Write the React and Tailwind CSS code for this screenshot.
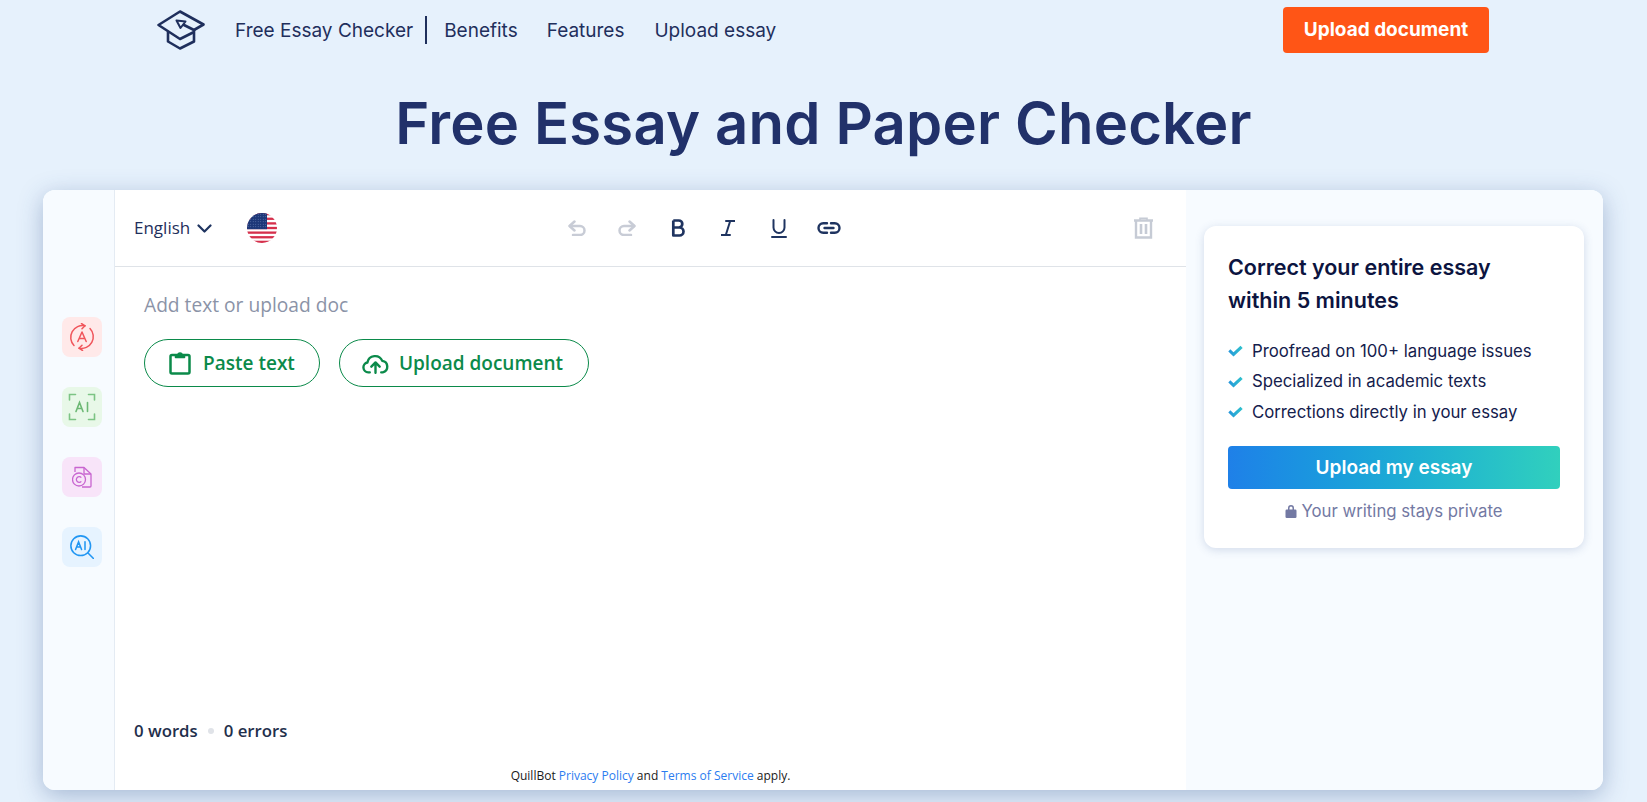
import React from 'react';

const inter = "font-['Inter',sans-serif]";
const openSans = "font-['Open_Sans',sans-serif]";

const LogoCap = () => (
  <svg width="48" height="40" viewBox="0 0 48 40" fill="none" stroke="#1f2f5c" strokeWidth="2.600" strokeLinejoin="round" strokeLinecap="round">
    <path d="M36 22.500 L23 29 L1.500 15 L23 1.500 L46.500 14.500 L37 20 L27 15" />
    <path d="M19.500 10.500 L28.500 11.500 L23.500 18 Z" strokeWidth="2" />
    <path d="M11 22 V31.500 L23 38.500 L37 31.500 V20" />
  </svg>
);

const stripes = [0, 2, 4, 6, 8, 10, 12];

const UsFlag = () => (
  <svg width="30" height="30" viewBox="0 0 30 30">
    <defs>
      <clipPath id="flag-circle"><circle cx="15" cy="15" r="15" /></clipPath>
      <pattern id="flag-stars" width="2.500" height="2.500" patternUnits="userSpaceOnUse">
        <circle cx="1.200" cy="1.200" r="0.450" fill="#7d93c4" />
      </pattern>
    </defs>
    <g clipPath="url(#flag-circle)">
      <rect width="30" height="30" fill="#fff" />
      {stripes.map((i) => (
        <rect key={i} y={i * 2.31} width="30" height="2.310" fill="#d5304c" />
      ))}
      <rect width="20" height="16.200" fill="#1d3778" />
      <rect width="20" height="16.200" fill="url(#flag-stars)" />
    </g>
  </svg>
);

const Chevron = () => (
  <svg width="15" height="9" viewBox="0 0 15 9" fill="none" stroke="#1f3460" strokeWidth="2.200" strokeLinecap="round" strokeLinejoin="round">
    <path d="M1.500 1.500L7.500 7.500L13.500 1.500" />
  </svg>
);

const UndoIcon = ({ flip }) => (
  <svg width="18" height="16" viewBox="0 0 18 16" fill="none" stroke="#c8ccd6" strokeWidth="2.500" strokeLinecap="round" strokeLinejoin="round" className={flip ? '-scale-x-100' : ''}>
    <path d="M6.500 1.500L1.500 6L6.500 10.500" />
    <path d="M2 6H12a4.500 4.500 0 0 1 0 9H5" />
  </svg>
);

const BoldIcon = () => (
  <svg width="14" height="18" viewBox="0 0 14 18" fill="none" stroke="#1f3460" strokeWidth="2.700" strokeLinejoin="round">
    <path d="M2.300 1.500V16.500H8.500a4 4 0 0 0 0-8H2.300M2.300 1.500H7.800a3.500 3.500 0 0 1 0 7" />
  </svg>
);

const ItalicIcon = () => (
  <svg width="14" height="16" viewBox="0 0 14 16" fill="none" stroke="#1f3460" strokeWidth="2" strokeLinecap="round">
    <path d="M5 1H13.500M0.500 15H9M9.200 1L4.800 15" />
  </svg>
);

const UnderlineIcon = () => (
  <svg width="16" height="19" viewBox="0 0 16 19" fill="none" stroke="#1f3460" strokeWidth="2" strokeLinecap="round">
    <path d="M2.500 1V8.500a5.500 5.500 0 0 0 11 0V1" />
    <path d="M1 18H15" />
  </svg>
);

const LinkIcon = () => (
  <svg width="24" height="12" viewBox="0 0 24 12" fill="none" stroke="#1f3460" strokeWidth="2.400" strokeLinecap="round">
    <path d="M10 1.300H6.200a4.700 4.700 0 0 0 0 9.400H10" />
    <path d="M14 1.300H17.800a4.700 4.700 0 0 1 0 9.400H14" />
    <path d="M7.500 6H16.500" />
  </svg>
);

const TrashIcon = () => (
  <svg width="19" height="22" viewBox="0 0 19 22" fill="none" stroke="#c6cbd5" strokeWidth="2.400">
    <path d="M0 3.500H19" />
    <path d="M6 3V1.200H13V3" strokeWidth="1.600" />
    <path d="M2 3.500V20.500H17V3.500" />
    <path d="M7 7V17M12 7V17" strokeWidth="2.600" />
  </svg>
);

const ClipboardIcon = () => (
  <svg width="22" height="24" viewBox="0 0 22 24" fill="none" stroke="#0b8a4a" strokeWidth="2.500" strokeLinejoin="round">
    <rect x="1.500" y="4" width="19" height="18.500" rx="1.500" />
    <path d="M6.500 4V6.500H15.500V4H13a2 2 0 0 0-4 0Z" fill="#0b8a4a" strokeWidth="1.500" />
  </svg>
);

const CloudIcon = () => (
  <svg width="27" height="21" viewBox="0 0 26 20" fill="none" stroke="#0b8a4a" strokeWidth="2.300" strokeLinecap="round" strokeLinejoin="round">
    <path d="M7.500 18.500H6a4.800 4.800 0 0 1-.8-9.500A7.500 7.500 0 0 1 19.500 7.500a5.600 5.600 0 0 1 .5 11H18.500" />
    <path d="M13 19V9.500M9 13l4-4 4 4" />
  </svg>
);

const CheckMark = () => (
  <svg width="15" height="12" viewBox="0 0 15 12" className="shrink-0">
    <defs>
      <linearGradient id="check-fill" x1="0" y1="0" x2="1" y2="0">
        <stop offset="0" stopColor="#2595dc" />
        <stop offset="1" stopColor="#2fc4cc" />
      </linearGradient>
    </defs>
    <path d="M0.300 6.500L2.300 4.300L5.500 7.300L12.500 0.800L14.700 3L5.500 11.500Z" fill="url(#check-fill)" />
  </svg>
);

const LockIcon = () => (
  <svg width="12" height="14" viewBox="0 0 12 14" fill="#7379a3" className="shrink-0">
    <path d="M3 6V4a3 3 0 0 1 6 0v2h-1.500V4a1.500 1.500 0 0 0-3 0v2Z" />
    <rect x="0.500" y="5.500" width="11" height="8.500" rx="1.200" />
  </svg>
);

const SideIcon = ({ bg, children }) => (
  <div className={`w-10 h-10 rounded-lg flex items-center justify-center ${bg}`}>{children}</div>
);

const benefits = ['Proofread on 100+ language issues', 'Specialized in academic texts', 'Corrections directly in your essay'];

export default function App() {
  return (
    <div className={`h-[802px] overflow-hidden bg-[#e6f1fc] ${inter}`}>
      <nav className="h-[60px] flex items-center pl-[157px] pr-[158px]">
        <LogoCap />
        <div className="flex items-center ml-[30px] text-[19px] text-[#1f2f5c]">
          <span className="pr-3 border-r-2 border-[#1f2f5c] leading-[26px] pt-[2px]">Free Essay Checker</span>
          <a className="ml-[17px] pt-[2px]">Benefits</a>
          <a className="ml-[29px] pt-[2px]">Features</a>
          <a className="ml-[30px] pt-[2px]">Upload essay</a>
        </div>
        <button className="ml-auto w-[206px] h-[46px] rounded bg-[#ff5516] text-white text-[19px] font-bold pt-[1px]">Upload document</button>
      </nav>

      <h1 className="h-[130px] pt-[30px] text-center text-[58px] leading-[66px] font-semibold tracking-[0.2px] text-[#21316a]">Free Essay and Paper Checker</h1>

      <div className="ml-[43px] mr-[44px] h-[600px] rounded-xl overflow-hidden bg-white flex shadow-[0_6px_24px_rgba(50,80,140,0.35)]">
        <aside className="w-[72px] shrink-0 bg-[#f7fbff] border-r border-[#e4ebf3] flex flex-col items-center gap-[30px] pt-[127px] pl-[7px]">
          <SideIcon bg="bg-[#ffe9e9]">
            <svg width="28" height="28" viewBox="0 0 28 28" fill="none" stroke="#f0555b" strokeWidth="1.500" strokeLinecap="round" strokeLinejoin="round">
              <path d="M6 22.500A11.800 11.800 0 0 1 17 2.800M22 5.500A11.800 11.800 0 0 1 11 25.200" />
              <path d="M13.500 0.500l3.500 2.300-3 3M14.500 27.500l-3.500-2.300 3-3" />
              <path d="M9.800 18.500L14 9l4.200 9.500M11.300 15.500h5.400" />
            </svg>
          </SideIcon>
          <SideIcon bg="bg-[#e8f8e8]">
            <svg width="28" height="28" viewBox="0 0 28 28" fill="none" stroke="#7cc484" strokeWidth="1.600" strokeLinecap="round">
              <path d="M1.500 7V1.500h6M20.500 1.500h6V7M26.500 21v5.500h-6M7.500 26.500h-6V21" />
              <path d="M8 18.500L11.500 9.500l3.500 9M9.200 15.500h4.600M19.500 9.500v9" stroke="#6cb874" />
            </svg>
          </SideIcon>
          <SideIcon bg="bg-[#f8e4f9]">
            <svg width="20" height="22" viewBox="0 0 20 22" fill="none" stroke="#c865d0" strokeWidth="1.300" strokeLinejoin="round">
              <path d="M3 6V1.500H12L19 8V20a1 1 0 0 1-1 1H10" />
              <path d="M12 1.500V8H19" />
              <circle cx="7" cy="13.500" r="6.500" />
              <path d="M9.300 11.700a2.800 2.800 0 1 0 0 3.600" />
            </svg>
          </SideIcon>
          <SideIcon bg="bg-[#e6f3ff]">
            <svg width="24" height="24" viewBox="0 0 28 28" fill="none" stroke="#2196f3" strokeWidth="1.800" strokeLinecap="round">
              <circle cx="12.500" cy="12.500" r="11.500" />
              <path d="M21 21l6.500 6.500" />
              <path d="M6.500 17L10 8l3.500 9M7.800 14h4.400M17.500 8v9" />
            </svg>
          </SideIcon>
        </aside>

        <main className="w-[1071px] shrink-0 flex flex-col">
          <div className={`h-[77px] shrink-0 border-b border-[#dfe3e8] flex items-center pl-[19px] pr-[33px] ${openSans}`}>
            <span className="w-[56px] text-[17px] text-[#1f2f5c]">English</span>
            <span className="ml-[7px] flex"><Chevron /></span>
            <span className="ml-[35px] flex"><UsFlag /></span>
            <div className="ml-[288px] flex items-center gap-[26.400px]">
              <span className="w-6 flex justify-center"><UndoIcon /></span>
              <span className="w-6 flex justify-center"><UndoIcon flip /></span>
              <span className="w-6 flex justify-center"><BoldIcon /></span>
              <span className="w-6 flex justify-center"><ItalicIcon /></span>
              <span className="w-6 flex justify-center"><UnderlineIcon /></span>
              <span className="w-6 flex justify-center"><LinkIcon /></span>
            </div>
            <span className="ml-auto flex"><TrashIcon /></span>
          </div>

          <div className={`flex-1 pl-[29px] pt-[26px] ${openSans}`}>
            <p className="text-[19.200px] leading-[24px] text-[#8b93a7]">Add text or upload doc</p>
            <div className="mt-[22px] flex gap-[19px]">
              <button className="h-[48px] w-[176px] rounded-full border border-[#0b8a4a] flex items-center justify-center gap-[12px] text-[#0b8a4a] text-[19px] font-semibold">
                <ClipboardIcon />
                Paste text
              </button>
              <button className="h-[48px] w-[250px] rounded-full border border-[#0b8a4a] flex items-center justify-center gap-[10px] pr-[3px] text-[#0b8a4a] text-[19px] font-semibold">
                <CloudIcon />
                Upload document
              </button>
            </div>
          </div>

          <div className={`pl-[19px] flex items-center text-[16.800px] font-semibold text-[#1f2f4c] h-[24px] ${openSans}`}>
            <span>0 words</span>
            <span className="mx-[10px] w-[6px] h-[6px] rounded-full bg-[#e0e3e8]" />
            <span>0 errors</span>
          </div>
          <div className={`h-[47px] pt-[23px] text-center text-[12px] leading-[20px] text-[#1a1a1a] ${openSans}`}>
            QuillBot <a className="text-[#2b7cf0]">Privacy Policy</a> and <a className="text-[#2b7cf0]">Terms of Service</a> apply.
          </div>
        </main>

        <section className="flex-1 bg-[#f7fbff] pl-[18px] pr-[19px] pt-[36px]">
          <div className="h-[322px] rounded-xl bg-white shadow-[0_2px_10px_rgba(60,90,150,0.2)] px-[24px] pt-[25px]">
            <h2 className="text-[21.500px] leading-[33px] font-semibold text-[#0c1440]">Correct your entire essay<br />within 5 minutes</h2>
            <ul className="mt-[19px] flex flex-col">
              {benefits.map((b) => (
                <li key={b} className="flex items-center gap-[9px] h-[30.500px] text-[16.750px] text-[#14204c]">
                  <CheckMark />
                  {b}
                </li>
              ))}
            </ul>
            <button className="mt-[18px] w-full h-[43px] rounded bg-gradient-to-r from-[#1f80e8] to-[#31d0bd] text-white text-[19px] font-semibold pt-[2px]">Upload my essay</button>
            <div className="mt-[10px] flex items-center justify-center gap-[4px] text-[16.750px] text-[#7379a3]">
              <LockIcon />
              Your writing stays private
            </div>
          </div>
        </section>
      </div>
    </div>
  );
}
